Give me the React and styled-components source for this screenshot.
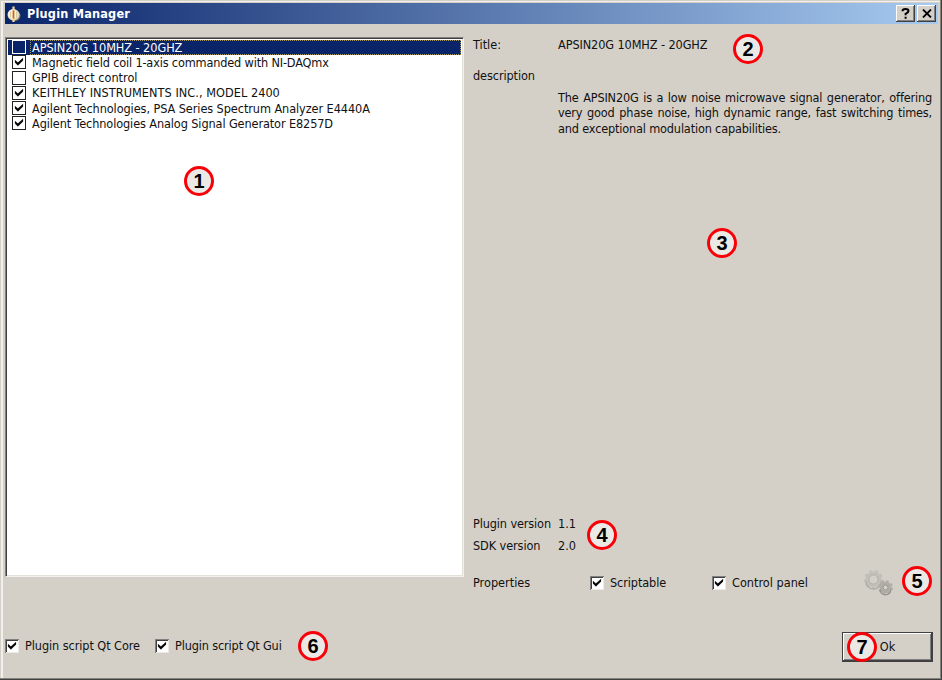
import React from 'react';
import styled, { createGlobalStyle } from 'styled-components';

const Global = createGlobalStyle`
  *{box-sizing:border-box}
  body{margin:0;background:#d4d0c8;overflow:hidden}
  button{font:inherit}
`;
const Dialog = styled.main`
  position:relative;width:942px;height:680px;padding:3px 4px 3px 5px;
  background:#d4d0c8;display:flex;flex-direction:column;
  font:12.6px/15.3px "DejaVu Sans Condensed","DejaVu Sans",sans-serif;font-stretch:condensed;color:#111;
  box-shadow:inset -1px -1px #404040,inset -2px -2px #85827c,inset 1px 1px #d4d0c8,inset 3px 2px #f2f0ec;
`;
const TitleBar = styled.header`
  height:21px;display:flex;align-items:center;flex:none;padding:0 2px 0 1px;
  background:linear-gradient(90deg,#0a246a,#a6caf0);color:#fff;
`;
const Title = styled.h1`
  margin:0 auto 0 5px;font:bold 12.6px/20px "DejaVu Sans Condensed","DejaVu Sans",sans-serif;font-stretch:condensed;
  letter-spacing:.2px;
`;
const CaptionButton = styled.button`
  width:19px;height:17px;margin-left:2px;padding:0;border:0;background:#d4d0c8;display:grid;place-items:center;
  box-shadow:inset -1px -1px #404040,inset 1px 1px #fff,inset -2px -2px #808080;
`;
const Content = styled.div`
  display:grid;grid-template-columns:459px 1fr;column-gap:9px;padding-top:13px;height:574px;flex:none;
`;
const List = styled.ul`
  list-style:none;margin:0;padding:1.6px 2px 2px;background:#fff;height:540px;
  border:1px solid;border-color:#808080 #f2f0ec #f2f0ec #808080;
  box-shadow:inset 1px 1px #404040,inset -1px -1px #e4e1da;
`;
const Row = styled.li`
  height:15.25px;display:flex;align-items:center;gap:4px;padding-left:4px;
  color:${p => (p.$selected ? '#fff' : '#111')};background:${p => (p.$selected ? '#0a246a' : 'transparent')};
`;
const RowText = styled.span`
  flex:1;white-space:pre;height:15px;line-height:15px;padding-left:2px;
  outline:${p => (p.$selected ? '1px dotted #a99a5c' : 'none')};outline-offset:-1px;
`;
const Text = styled.span`white-space:pre;letter-spacing:${p => p.$ls || 0}px;`;
const FlatBox = styled.span`
  width:14px;height:14px;display:grid;place-items:center;flex:none;
  border:1.5px solid ${p => (p.$selected ? '#fff' : '#222')};
`;
const SunkenBox = styled.span`
  width:14px;height:14px;background:#fff;display:grid;place-items:center;flex:none;
  box-shadow:inset 1px 1px #808080,inset -1px -1px #eceae6,inset 2px 2px #404040;
`;
const Details = styled.section`display:flex;flex-direction:column;padding-right:6px;`;
const Field = styled.div`
  display:grid;grid-template-columns:85px 1fr;height:${p => p.$h}px;flex:none;
`;
const Description = styled.p`margin:0 0 auto 85px;text-align:justify;letter-spacing:-.17px;`;
const Properties = styled.div`
  display:grid;grid-template-columns:117px 122px 151px 1fr;align-items:center;height:30px;margin-top:8px;
`;
const Option = styled.label`display:flex;align-items:center;gap:6px;`;
const Footer = styled.footer`display:flex;align-items:center;height:30px;margin-top:33px;gap:15px;`;
const OkButton = styled.button`
  width:91px;height:30px;margin:2px 5px 0 auto;padding:0;border:0;background:#d4d0c8;color:#111;
  box-shadow:inset 0 0 0 1px #404040,inset -2px -2px #404040,inset 2px 2px #fff,inset -3px -3px #808080;
`;
const Marker = styled.span`
  position:absolute;left:${p => p.$x - 15}px;top:${p => p.$y - 15}px;width:30px;height:30px;
  border:3px solid #f80008;border-radius:50%;background:#ebe9e6;color:#000;
  font:bold 20px/25px "Liberation Sans",Arial,sans-serif;text-align:center;
`;

const Tick = () => (
  <svg width="10" height="10" viewBox="0 0 10 10"><path d="M1 3v2.6L3.9 8.4 9 3.4V.9L3.9 5.6z" fill="#000" stroke="#000" strokeWidth=".2" /></svg>
);
const AppIcon = () => (
  <svg width="16" height="18" viewBox="0 0 16 18">
    <ellipse cx="8.5" cy="10.8" rx="6" ry="5.2" fill="#7d7866" />
    <ellipse cx="7.5" cy="9.7" rx="6" ry="5.6" fill="#e2d8ba" />
    <ellipse cx="6.7" cy="9.2" rx="4.6" ry="4.8" fill="#faf3df" />
    <path d="M7.5 1.5v15.5" stroke="#f1d9a0" strokeWidth="2.2" /><path d="M7.5 5.5v8" stroke="#c8662c" strokeWidth="1.6" />
    <path d="M4.5 6.5v6M10.5 6.5v6" stroke="#cbbf98" strokeWidth=".8" />
  </svg>
);
const Cog = ({ cx, cy, r, fill, rim, teeth }) => (
  <g transform={`translate(${cx} ${cy})`}>
    <circle r={r + .8} fill="none" stroke={fill} strokeWidth="2.4" strokeDasharray={`${(Math.PI * (r + .8)) / teeth} ${(Math.PI * (r + .8)) / teeth}`} />
    <circle r={r - 1.2} fill="none" stroke={fill} strokeWidth="3.4" />
    <circle r={r - 3} fill="none" stroke={rim} strokeWidth=".8" />
    <path d={`M${-r} 2A${r} ${r} 0 0 0 ${r} 2`} fill="none" stroke={rim} strokeWidth="1.2" />
  </g>
);
const Gears = () => (
  <svg width="32" height="30" viewBox="0 0 32 30">
    <Cog cx={10.5} cy={11.5} r={7.6} teeth={9} fill="#c3c0b9" rim="#aaa7a0" />
    <Cog cx={22.5} cy={19.5} r={5.4} teeth={8} fill="#b0ada6" rim="#94918b" />
  </svg>
);

const plugins = [
  ['APSIN20G 10MHZ - 20GHZ', false, -0.06],
  ['Magnetic field coil 1-axis commanded with NI-DAQmx', true, -0.16],
  ['GPIB direct control', false, 0],
  ['KEITHLEY INSTRUMENTS INC., MODEL 2400', true, 0.04],
  ['Agilent Technologies, PSA Series Spectrum Analyzer E4440A', true, -0.08],
  ['Agilent Technologies Analog Signal Generator E8257D', true, -0.11],
];
const markers = [[199, 181], [748, 49], [722, 243], [602, 535], [917, 581], [313, 646], [862, 647]];

const Check = ({ children, ls }) => (
  <Option><SunkenBox><Tick /></SunkenBox><Text $ls={ls}>{children}</Text></Option>
);

export default function App() {
  return (
    <Dialog>
      <Global />
      <TitleBar>
        <AppIcon /><Title>Plugin Manager</Title>
        <CaptionButton aria-label="Help"><svg width="9" height="11" viewBox="0 0 9 11"><path d="M1.5 3.2Q1.5 1 4.5 1T7.5 3Q7.5 4.4 4.6 5.8V7.3M4.6 8.8v2" fill="none" stroke="#000" strokeWidth="2" /></svg></CaptionButton>
        <CaptionButton aria-label="Close"><svg width="10" height="9" viewBox="0 0 10 9"><path d="M1 .5l8 8M9 .5l-8 8" stroke="#000" strokeWidth="1.8" /></svg></CaptionButton>
      </TitleBar>
      <Content>
        <List>
          {plugins.map(([name, on, ls], i) => (
            <Row key={name} $selected={i === 0}>
              <FlatBox $selected={i === 0}>{on && <Tick />}</FlatBox>
              <RowText $selected={i === 0}><Text $ls={ls}>{name}</Text></RowText>
            </Row>
          ))}
        </List>
        <Details>
          <Field $h={31}><Text>Title:</Text><Text $ls={-0.1}>APSIN20G 10MHZ - 20GHZ</Text></Field>
          <Field $h={22}><Text $ls={-0.1}>description</Text></Field>
          <Description>The APSIN20G is a low noise microwave signal generator, offering very good phase noise, high dynamic range, fast switching times, and exceptional modulation capabilities.</Description>
          <Field $h={22}><Text $ls={-0.13}>Plugin version</Text><Text>1.1</Text></Field>
          <Field $h={22}><Text $ls={-0.1}>SDK version</Text><Text>2.0</Text></Field>
          <Properties><Text>Properties</Text><Check ls={-0.1}>Scriptable</Check><Check>Control panel</Check><Gears /></Properties>
        </Details>
      </Content>
      <Footer><Check ls={-0.08}>Plugin script Qt Core</Check><Check ls={-0.14}>Plugin script Qt Gui</Check><OkButton>Ok</OkButton></Footer>
      {markers.map(([x, y], i) => <Marker key={i} $x={x} $y={y}>{i + 1}</Marker>)}
    </Dialog>
  );
}
